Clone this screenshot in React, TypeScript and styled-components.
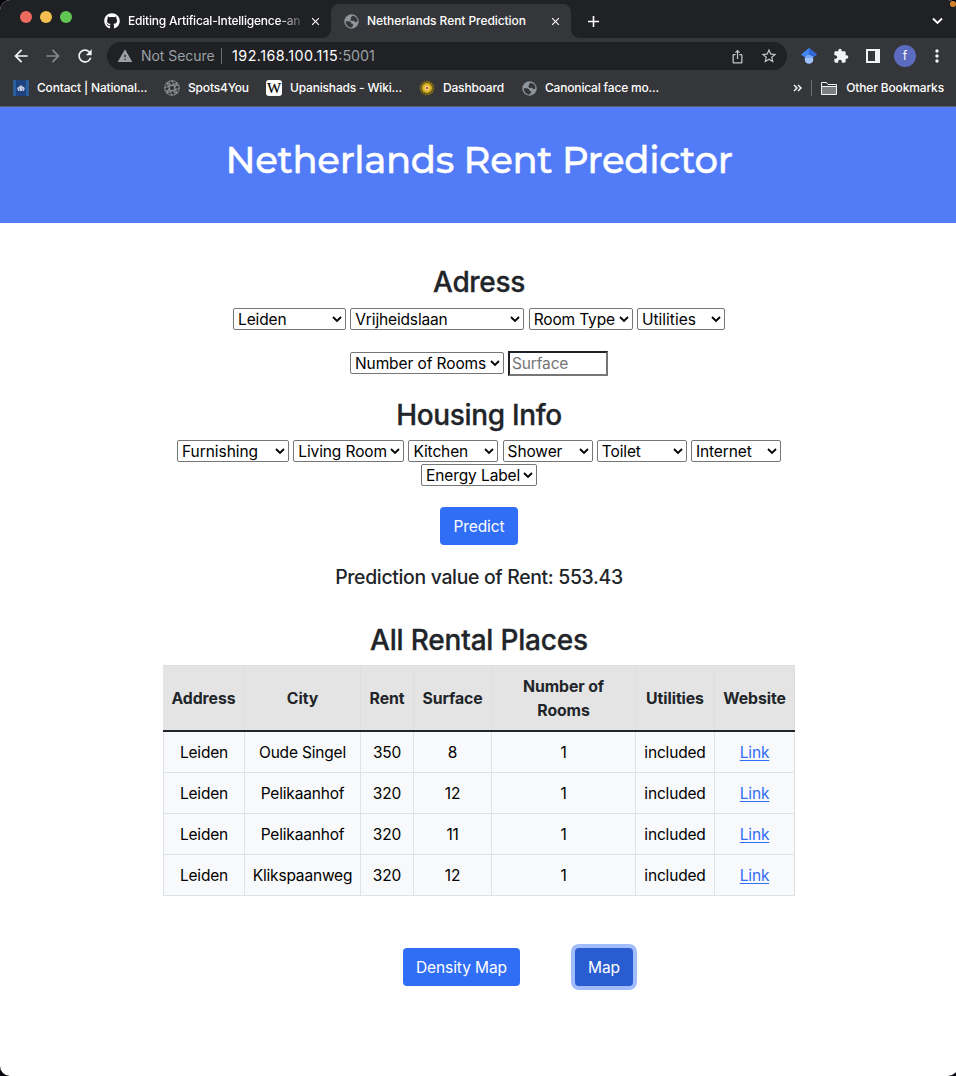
import React from "react";
import styled, { createGlobalStyle, css } from "styled-components";
import {
  MdAdd,
  MdArrowBack,
  MdArrowForward,
  MdClose,
  MdExtension,
  MdMoreVert,
  MdOutlineIosShare,
  MdRefresh,
  MdStarBorder,
  MdWarning,
} from "react-icons/md";
import { FaGithub } from "react-icons/fa";

const GlobalStyle = createGlobalStyle`
  *, *::before, *::after { box-sizing: border-box; }
  body {
    margin: 0;
    background: #06040f;
    font-family: Inter, "Liberation Sans", sans-serif;
    overflow: hidden;
  }
`;

const Window = styled.div`
  width: 958px;
  height: 1076px;
  border-radius: 10px;
  overflow: hidden;
  background: #fff;
  display: flex;
  flex-direction: column;
`;

/* ---------- browser chrome ---------- */

const TabStrip = styled.div`
  height: 38px;
  flex: none;
  display: flex;
  align-items: flex-end;
  background: #202124;
  color: #fff;
`;

const Lights = styled.div`
  display: flex;
  gap: 8px;
  padding: 11px 0 0 20px;
  width: 90px;
  height: 38px;
`;

const Light = styled.span<{ $color: string }>`
  width: 12px;
  height: 12px;
  border-radius: 50%;
  background: ${(p) => p.$color};
`;

const Tab = styled.div<{ $active?: boolean; $width: number }>`
  position: relative;
  display: flex;
  align-items: center;
  width: ${(p) => p.$width}px;
  height: 34px;
  padding: 0 9px 0 ${(p) => (p.$active ? 13 : 14)}px;
  border-radius: 8px 8px 0 0;
  ${(p) =>
    p.$active &&
    css`
      background: #35363a;
      &::before,
      &::after {
        content: "";
        position: absolute;
        bottom: 0;
        width: 8px;
        height: 8px;
      }
      &::before {
        left: -8px;
        background: radial-gradient(circle at 0 0, transparent 7.5px, #35363a 8px);
      }
      &::after {
        right: -8px;
        background: radial-gradient(circle at 100% 0, transparent 7.5px, #35363a 8px);
      }
    `}
`;

const TabTitle = styled.span<{ $fade?: boolean; $left: number; $spacing: number }>`
  flex: 1;
  margin-left: ${(p) => p.$left}px;
  font-size: 12px;
  line-height: 16px;
  font-weight: 500;
  letter-spacing: ${(p) => p.$spacing}px;
  white-space: nowrap;
  overflow: hidden;
  ${(p) =>
    p.$fade &&
    css`
      mask-image: linear-gradient(to right, #000 150px, transparent 178px);
    `}
`;

const NewTab = styled.div`
  display: flex;
  align-items: center;
  justify-content: center;
  width: 44px;
  height: 34px;
`;

const TabSearch = styled.div`
  margin-left: auto;
  display: flex;
  align-items: center;
  padding-right: 15px;
  height: 34px;
`;

const RecordingDot = styled.span`
  position: absolute;
  top: 1px;
  left: 950px;
  width: 6px;
  height: 6px;
  border-radius: 50%;
  background: #d5832b;
`;

const Toolbar = styled.div`
  height: 36px;
  flex: none;
  display: flex;
  align-items: center;
  background: #35363a;
  color: #f1f3f4;
`;

const ToolSlot = styled.span<{ $dim?: boolean }>`
  width: 32px;
  display: flex;
  justify-content: center;
  color: ${(p) => (p.$dim ? "#85878b" : "#f1f3f4")};
`;

const NavTools = styled.div`
  display: flex;
  padding-left: 5px;
  width: 107px;
`;

const AddressBar = styled.div`
  width: 680px;
  height: 28px;
  border-radius: 14px;
  background: #202124;
  display: flex;
  align-items: center;
  padding: 0 2px 0 10px;
  font-size: 14px;
  line-height: 20px;
  color: #9aa0a6;
`;

const Security = styled.span`
  flex: none;
  width: 80px;
  margin-left: 8px;
  letter-spacing: -0.06px;
  white-space: nowrap;
`;

const Divider = styled.i`
  width: 1px;
  height: 16px;
  background: #6d7074;
`;

const Url = styled.span`
  margin-left: 10px;
  flex: 1;
  font-size: 14.3px;
  letter-spacing: 0px;
`;

const Host = styled.span`
  color: #fff;
  letter-spacing: 0.48px;
`;

const Extensions = styled.div`
  display: flex;
  align-items: center;
  padding-left: 6px;
`;

const Avatar = styled.span`
  width: 22px;
  height: 22px;
  border-radius: 50%;
  background: #5c6bc0;
  color: #fff;
  font-size: 12px;
  line-height: 21px;
  text-align: center;
`;

const Bookmarks = styled.div`
  height: 33px;
  flex: none;
  display: flex;
  align-items: center;
  background: #35363a;
  border-bottom: 1px solid #5b6175;
  color: #fff;
  font-size: 12px;
  line-height: 16px;
  font-weight: 500;
  letter-spacing: -0.18px;
  padding: 0 14px 4px 13px;
`;

const Bookmark = styled.span<{ $width?: number; $gap?: number }>`
  display: flex;
  align-items: center;
  gap: ${(p) => p.$gap ?? 8}px;
  width: ${(p) => (p.$width ? `${p.$width}px` : "auto")};
  white-space: nowrap;
`;

const OtherBookmarks = styled.div`
  margin-left: auto;
  letter-spacing: -0.14px;
`;

/* ---------- page ---------- */

const Header = styled.header`
  height: 116px;
  flex: none;
  background: #527bf7;
  text-align: center;
  padding-top: 29px;
`;

const Title = styled.h1`
  margin: 0;
  font-family: Montserrat, Inter, sans-serif;
  font-size: 37px;
  line-height: 48px;
  font-weight: 500;
  letter-spacing: -0.34px;
  color: #fff;
  -webkit-text-stroke: 0.4px #fff;
`;

const Main = styled.main`
  display: flex;
  flex-direction: column;
  align-items: center;
  padding-top: 42px;
  color: #212529;
`;

const Heading = styled.h2<{ $top?: number; $spacing?: number }>`
  margin: ${(p) => p.$top ?? 0}px 0 0;
  font-size: 28px;
  line-height: 34px;
  font-weight: 500;
  letter-spacing: ${(p) => p.$spacing ?? -0.34}px;
  -webkit-text-stroke: 0.3px #212529;
`;

const FieldRow = styled.div<{ $top: number; $gap?: number }>`
  display: flex;
  align-items: center;
  justify-content: center;
  gap: ${(p) => p.$gap ?? 4}px;
  margin-top: ${(p) => p.$top}px;
`;

const SelectBox = styled.div<{ $width: number }>`
  width: ${(p) => p.$width}px;
  height: 22px;
  display: flex;
  align-items: center;
  justify-content: space-between;
  padding: 0 3px 0 4px;
  border: 1px solid #767676;
  border-radius: 2px;
  background: #fff;
  color: #000;
  font-size: 15.5px;
  line-height: 20px;
  white-space: nowrap;
`;

const SurfaceInput = styled.input`
  width: 100px;
  height: 25px;
  margin: 0 0 -1px;
  padding: 0 2px;
  border: 2px solid;
  border-color: #1f2226 #767676 #767676 #1f2226;
  border-radius: 0;
  background: #fff;
  font: 15.5px Inter, sans-serif;
  letter-spacing: -0.15px;
  &::placeholder {
    color: #757575;
    opacity: 1;
  }
`;

const Button = styled.button<{ $focused?: boolean; $width: number }>`
  width: ${(p) => p.$width}px;
  height: 38px;
  padding: 1px 0 0;
  border: 0;
  border-radius: 4px;
  background: ${(p) => (p.$focused ? "#295cd0" : "#316ef6")};
  box-shadow: ${(p) => (p.$focused ? "0 0 0 4px #a0bcfb" : "none")};
  color: #fff;
  font: 15.5px/37px Inter, sans-serif;
  letter-spacing: -0.08px;
`;

const Result = styled.p`
  margin: 20px 0 0;
  font-size: 19.4px;
  line-height: 24px;
  font-weight: 500;
  letter-spacing: -0.32px;
`;

const Table = styled.table`
  width: 632px;
  margin-top: 8px;
  table-layout: fixed;
  border-collapse: separate;
  border-spacing: 0;
  text-align: center;
  font-size: 15.5px;
  line-height: 24px;
`;

const HeadCell = styled.th<{ $width: number }>`
  width: ${(p) => p.$width}px;
  height: 67px;
  padding: 2px 5px 0 4px;
  background: #e4e4e4;
  border-bottom: 2px solid #212529;
  box-shadow: inset -1px 1px #dddfe5;
  font-weight: 700;
  font-size: 15.8px;
  letter-spacing: -0.08px;
`;

const Cell = styled.td`
  height: 41px;
  padding: 2px 0 0;
  background: #f8f9fa;
  border-right: 1px solid #dee2e6;
  border-bottom: 1px solid #dee2e6;
  color: #000;
  letter-spacing: -0.18px;
  white-space: nowrap;
  &:first-child {
    border-left: 1px solid #dee2e6;
  }
`;

const Link = styled.a`
  color: #316ef6;
  text-decoration: underline;
  text-underline-offset: 2px;
  text-decoration-thickness: 1px;
`;

const Actions = styled.div`
  display: flex;
  gap: 55px;
  margin: 52px 0 0 78px;
`;

/* ---------- drawings ---------- */

const Chevron = () => (
  <svg width="10" height="8" viewBox="0 0 10 8" fill="none">
    <path d="M1 2 L5 6 L9 2" stroke="#000" strokeWidth="1.8" />
  </svg>
);

const Globe = ({ size = 15 }: { size?: number }) => (
  <svg width={size} height={size} viewBox="0 0 16 16">
    <circle cx="8" cy="8" r="7.7" fill="#8f959c" />
    <path
      d="M9 1.9l2.6.8c1.9 1.2 2.9 3 2.7 5.3l-2.1.9-1.6-1.6-2.7.1-1.3-1.9 1.1-.7-.3-1.3z"
      fill="#35363a"
    />
    <path
      d="M1.8 7.6l3.8.1 2.2 1.3.1 1.3 2 .9-.3 1.3-1.5 1.9C4.5 14.3 1.9 11.5 1.8 7.6z"
      fill="#35363a"
    />
  </svg>
);

const Crest = () => (
  <svg width="16" height="16" viewBox="0 0 16 16">
    <rect width="16" height="16" fill="#2a6099" />
    <rect x="3" width="10" height="16" fill="#1f4280" />
    <path
      d="M4.3 8.5l.8-1.8 1.3.3.5-1.5h2.2l.5 1.5 1.3-.3.8 1.8-.7 2.5H5z"
      fill="#c3cde4"
    />
    <path d="M6.5 8.500v2.500M9.500 8.500v2.500" stroke="#3b5488" strokeWidth=".6" />
  </svg>
);

const Aperture = () => (
  <svg width="16" height="16" viewBox="0 0 16 16" fill="none" stroke="#96989c" strokeWidth="0.9">
    <circle cx="8" cy="8" r="7.3" />
    <circle cx="8" cy="8" r="2.7" />
    <path d="M8 .7l2 4.6 4.8-.2M15.3 8l-4.6 2 .3 4.7M8 15.3l-2-4.6-4.7.3M.7 8l4.6-2L5 1.3M13.2 2.8L8 5.3 2.8 2.8M13.2 13.2L10.7 8l2.5-5.2M2.8 13.2L8 10.7l5.2 2.5M2.8 2.8L5.3 8l-2.5 5.2" />
  </svg>
);

const WikiTile = styled.span`
  display: flex;
  justify-content: center;
  width: 16px;
  height: 16px;
  border-radius: 3px;
  background: #fff;
  color: #000;
  font: 400 15px/16px "Liberation Serif", serif;
  letter-spacing: 0;
  -webkit-text-stroke: 0.2px #000;
  overflow: hidden;
`;

const Emblem = () => (
  <svg width="16" height="16" viewBox="0 0 16 16">
    <circle cx="8" cy="8" r="7.6" fill="#5b501e" />
    <circle cx="8" cy="8" r="6.2" fill="none" stroke="#8b7720" strokeWidth="1.2" strokeDasharray="1.5 1" />
    <circle cx="8" cy="8" r="5" fill="#d9b01d" />
    <circle cx="8" cy="8" r="2.5" fill="#f3dd9c" />
    <circle cx="8" cy="8" r="1.3" fill="#c8503b" />
  </svg>
);

const Scholar = () => (
  <svg width="16" height="16" viewBox="0 0 16 16">
    <path d="M8 0L0 6.5l4.2 2.9h7.6L16 6.5z" fill="#4285f4" />
    <path d="M8 0v8h5.5L16 6.5z" fill="#3367d6" />
    <circle cx="8" cy="11.5" r="4.3" fill="#a0c3ff" />
    <path d="M4 10a4.3 4.3 0 018 0z" fill="#76a7fa" />
  </svg>
);

const SidePanel = () => (
  <svg width="14" height="14" viewBox="0 0 14 14">
    <path d="M0 0h14v14H0zM2 2v10h7V2z" fill="#f1f3f4" fillRule="evenodd" />
  </svg>
);

const Folder = () => (
  <svg width="16" height="13" viewBox="0 0 16 13">
    <path d="M.5 12.5V.5h5l1.5 2h8.5v10z" fill="#35363a" stroke="#f1f3f4" />
    <path d="M1 4.5h14V12H1z" fill="#7c7e82" />
    <path d="M.5 4.5h15" stroke="#f1f3f4" />
  </svg>
);

const DownChevron = () => (
  <svg width="11" height="8" viewBox="0 0 11 8" fill="none">
    <path d="M1 1.5L5.5 6 10 1.5" stroke="#fff" strokeWidth="1.8" />
  </svg>
);

const Overflow = () => (
  <svg width="9" height="8" viewBox="0 0 9 8" fill="none">
    <path d="M1 1l3 3-3 3M5 1l3 3-3 3" stroke="#fff" strokeWidth="1.4" />
  </svg>
);

/* ---------- content ---------- */

type Option = { label: string; width: number; spacing?: number };

const Label = styled.span<{ $spacing: number }>`
  padding-top: 2px;
  letter-spacing: ${(p) => p.$spacing}px;
`;

const Select = ({ label, width, spacing = -0.12 }: Option) => (
  <SelectBox $width={width}>
    <Label $spacing={spacing}>{label}</Label>
    <Chevron />
  </SelectBox>
);

const BookmarkName = styled.span`
  padding-bottom: 1px;
`;

const addressFields: Option[] = [
  { label: "Leiden", width: 113 },
  { label: "Vrijheidslaan", width: 174, spacing: -0.15 },
  { label: "Room Type", width: 104, spacing: -0.15 },
  { label: "Utilities", width: 88, spacing: 0 },
];

const housingFields: Option[] = [
  { label: "Furnishing", width: 112, spacing: -0.06 },
  { label: "Living Room", width: 111, spacing: -0.1 },
  { label: "Kitchen", width: 90 },
  { label: "Shower", width: 90 },
  { label: "Toilet", width: 90 },
  { label: "Internet", width: 90 },
];

const columns = [
  { label: "Address", width: 82 },
  { label: "City", width: 116 },
  { label: "Rent", width: 53 },
  { label: "Surface", width: 78 },
  { label: "Number of Rooms", width: 144 },
  { label: "Utilities", width: 79 },
  { label: "Website", width: 80 },
];

const rentals = [
  ["Leiden", "Oude Singel", "350", "8", "1", "included"],
  ["Leiden", "Pelikaanhof", "320", "12", "1", "included"],
  ["Leiden", "Pelikaanhof", "320", "11", "1", "included"],
  ["Leiden", "Klikspaanweg", "320", "12", "1", "included"],
];

export default function App() {
  return (
    <>
      <GlobalStyle />
      <Window>
        <TabStrip>
          <Lights>
            <Light $color="#ec6a5e" />
            <Light $color="#f4bf4f" />
            <Light $color="#61c554" />
          </Lights>
          <Tab $width={241}>
            <FaGithub size={16} />
            <TabTitle $fade $left={8} $spacing={-0.2}>
              Editing Artifical-Intelligence-an
            </TabTitle>
            <MdClose size={13} />
          </Tab>
          <Tab $active $width={240}>
            <Globe />
            <TabTitle $left={8} $spacing={-0.07}>
              Netherlands Rent Prediction
            </TabTitle>
            <MdClose size={13} />
          </Tab>
          <NewTab>
            <MdAdd size={19} />
          </NewTab>
          <TabSearch>
            <DownChevron />
          </TabSearch>
        </TabStrip>

        <Toolbar>
          <NavTools>
            <ToolSlot>
              <MdArrowBack size={20} />
            </ToolSlot>
            <ToolSlot $dim>
              <MdArrowForward size={20} />
            </ToolSlot>
            <ToolSlot>
              <MdRefresh size={20} />
            </ToolSlot>
          </NavTools>
          <AddressBar>
            <MdWarning size={16} />
            <Security>Not Secure</Security>
            <Divider />
            <Url>
              <Host>192.168.100.115</Host>:5001
            </Url>
            <ToolSlot>
              <MdOutlineIosShare size={15} color="#c4c7ca" />
            </ToolSlot>
            <ToolSlot>
              <MdStarBorder size={18} color="#c4c7ca" />
            </ToolSlot>
          </AddressBar>
          <Extensions>
            <ToolSlot>
              <Scholar />
            </ToolSlot>
            <ToolSlot>
              <MdExtension size={16} />
            </ToolSlot>
            <ToolSlot>
              <SidePanel />
            </ToolSlot>
            <ToolSlot>
              <Avatar>f</Avatar>
            </ToolSlot>
            <ToolSlot>
              <MdMoreVert size={20} />
            </ToolSlot>
          </Extensions>
        </Toolbar>

        <Bookmarks>
          <Bookmark $width={151}>
            <Crest />
            <BookmarkName>Contact | National...</BookmarkName>
          </Bookmark>
          <Bookmark $width={102}>
            <Aperture />
            <BookmarkName>Spots4You</BookmarkName>
          </Bookmark>
          <Bookmark $width={153}>
            <WikiTile>W</WikiTile>
            <BookmarkName>Upanishads - Wiki...</BookmarkName>
          </Bookmark>
          <Bookmark $width={103}>
            <Emblem />
            <BookmarkName>Dashboard</BookmarkName>
          </Bookmark>
          <Bookmark>
            <Globe />
            <BookmarkName>Canonical face mo...</BookmarkName>
          </Bookmark>
          <OtherBookmarks>
            <Bookmark $gap={9}>
              <Overflow />
              <Divider />
              <Folder />
              <BookmarkName>Other Bookmarks</BookmarkName>
            </Bookmark>
          </OtherBookmarks>
        </Bookmarks>

        <Header>
          <Title>Netherlands Rent Predictor</Title>
        </Header>

        <Main>
          <Heading>Adress</Heading>
          <FieldRow $top={9} $gap={4.33}>
            {addressFields.map((field) => (
              <Select key={field.label} {...field} />
            ))}
          </FieldRow>
          <FieldRow $top={21}>
            <Select label="Number of Rooms" width={154} spacing={-0.1} />
            <SurfaceInput placeholder="Surface" />
          </FieldRow>

          <Heading $top={23}>Housing Info</Heading>
          <FieldRow $top={8} $gap={4.2}>
            {housingFields.map((field) => (
              <Select key={field.label} {...field} />
            ))}
          </FieldRow>
          <FieldRow $top={2}>
            <Select label="Energy Label" width={116} spacing={-0.1} />
          </FieldRow>

          <FieldRow $top={21}>
            <Button $width={78}>Predict</Button>
          </FieldRow>
          <Result>Prediction value of Rent: 553.43</Result>

          <Heading $top={34} $spacing={-0.2}>
            All Rental Places
          </Heading>
          <Table>
            <thead>
              <tr>
                {columns.map((column) => (
                  <HeadCell key={column.label} $width={column.width}>
                    {column.label}
                  </HeadCell>
                ))}
              </tr>
            </thead>
            <tbody>
              {rentals.map((row, index) => (
                <tr key={index}>
                  {row.map((value, cell) => (
                    <Cell key={cell}>{value}</Cell>
                  ))}
                  <Cell>
                    <Link href="#">Link</Link>
                  </Cell>
                </tr>
              ))}
            </tbody>
          </Table>

          <Actions>
            <Button $width={117}>Density Map</Button>
            <Button $width={58} $focused>
              Map
            </Button>
          </Actions>
        </Main>
      </Window>
      <RecordingDot />
    </>
  );
}
